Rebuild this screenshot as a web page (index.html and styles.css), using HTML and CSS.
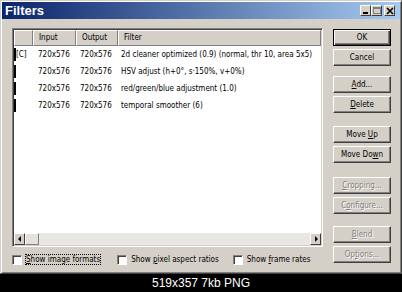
FILE: index.html
```html
<!DOCTYPE html>
<html>
<head>
<meta charset="utf-8">
<link rel="stylesheet" href="styles.css">
</head>
<body>
<div class="window">
  <div class="titlebar">
    <span class="title">Filters</span>
    <div class="tbuttons">
      <span class="tb tb-min"><svg width="8" height="8" viewBox="0 0 8 8"><rect x="1" y="5" width="5" height="2" fill="#000"/></svg></span>
      <span class="tb tb-max tb-dis"><svg width="8" height="8" viewBox="0 0 8 8"><rect x="0.5" y="0.5" width="7" height="6" fill="none" stroke="#808080"/><rect x="0" y="0" width="8" height="2" fill="#808080"/></svg></span>
      <span class="tb tb-close"><svg width="8" height="8" viewBox="0 0 8 8"><path d="M1 1 L7 7 M7 1 L1 7" stroke="#000" stroke-width="1.6"/></svg></span>
    </div>
  </div>
  <div class="content">
    <div class="left">
      <div class="list">
        <div class="header">
          <div class="hcol c0"></div>
          <div class="hcol c1">Input</div>
          <div class="hcol c2">Output</div>
          <div class="hcol c3">Filter</div>
        </div>
        <div class="rows">
          <div class="row"><span class="mark"></span><span class="cell c0">[C]</span><span class="cell c1">720x576</span><span class="cell c2">720x576</span><span class="cell c3">2d cleaner optimized (0.9) (normal, thr 10, area 5x5)</span></div>
          <div class="row"><span class="mark"></span><span class="cell c0"></span><span class="cell c1">720x576</span><span class="cell c2">720x576</span><span class="cell c3">HSV adjust (h+0°, s·150%, v+0%)</span></div>
          <div class="row"><span class="mark"></span><span class="cell c0"></span><span class="cell c1">720x576</span><span class="cell c2">720x576</span><span class="cell c3">red/green/blue adjustment (1.0)</span></div>
          <div class="row"><span class="mark"></span><span class="cell c0"></span><span class="cell c1">720x576</span><span class="cell c2">720x576</span><span class="cell c3">temporal smoother (6)</span></div>
        </div>
        <div class="hscroll">
          <span class="sbtn"><svg width="4" height="6" viewBox="0 0 4 6"><path d="M3 0 L0 3 L3 6 Z" fill="#000"/></svg></span>
          <span class="thumb"></span>
          <span class="track"></span>
          <span class="sbtn"><svg width="4" height="6" viewBox="0 0 4 6"><path d="M1 0 L4 3 L1 6 Z" fill="#000"/></svg></span>
        </div>
      </div>
      <div class="options">
        <label class="opt o1"><span class="cb"></span><span class="focus"><u>S</u>how image formats</span></label>
        <label class="opt o2"><span class="cb"></span><span>Show <u>p</u>ixel aspect ratios</span></label>
        <label class="opt o3"><span class="cb"></span><span>Show <u>f</u>rame rates</span></label>
      </div>
    </div>
    <div class="buttons">
      <div class="btn default"><span>OK</span></div>
      <div class="btn"><span>Cancel</span></div>
      <div class="btn g2"><span><u>A</u>dd...</span></div>
      <div class="btn"><span><u>D</u>elete</span></div>
      <div class="btn g3"><span>Move <u>U</u>p</span></div>
      <div class="btn"><span>Move Do<u>w</u>n</span></div>
      <div class="btn g4 dis"><span><u>C</u>ropping...</span></div>
      <div class="btn dis"><span>C<u>o</u>nfigure...</span></div>
      <div class="btn g5 dis"><span><u>B</u>lend</span></div>
      <div class="btn dis"><span>Op<u>t</u>ions...</span></div>
    </div>
  </div>
</div>
<div class="caption">519x357 7kb PNG</div>
</body>
</html>
```
FILE: styles.css
```css
html, body {
  margin: 0;
  padding: 0;
  background: #000;
}
body {
  width: 402px;
  height: 292px;
  overflow: hidden;
  font-family: "DejaVu Sans Condensed", "Liberation Sans", sans-serif;
  font-size: 8px;
  color: #000;
}
.window {
  box-sizing: border-box;
  width: 402px;
  height: 274px;
  background: #d4d0c8;
  border: 1px solid;
  border-color: #d4d0c8 #404040 #404040 #d4d0c8;
  box-shadow: inset 1px 1px 0 #fff, inset -1px -1px 0 #808080;
  padding: 1px;
  display: flex;
  flex-direction: column;
}
.titlebar {
  height: 17px;
  background: linear-gradient(to right, #0a246a, #a6caf0);
  display: flex;
  align-items: center;
  justify-content: space-between;
  padding: 0 5px 0 3px;
}
.title {
  font-family: "Liberation Sans", Arial, sans-serif;
  font-weight: bold;
  font-size: 13px;
  color: #fff;
}
.tbuttons {
  display: flex;
  gap: 0;
  align-items: center;
}
.tb {
  box-sizing: border-box;
  width: 11px;
  height: 11px;
  background: #d4d0c8;
  border: 1px solid;
  border-color: #fff #404040 #404040 #fff;
  display: flex;
  align-items: center;
  justify-content: center;
}
.tb svg { display: block; }
.tb-close { margin-left: 2px; }
.content {
  flex: 1;
  display: flex;
  padding: 9px 9px 0 10px;
  gap: 10px;
}
.left {
  width: 311px;
  display: flex;
  flex-direction: column;
}
.list {
  box-sizing: border-box;
  height: 219px;
  background: #fff;
  border: 1px solid;
  border-color: #808080 #fff #fff #808080;
  box-shadow: inset 1px 1px 0 #404040, inset -1px -1px 0 #d4d0c8;
  padding: 1px;
  display: flex;
  flex-direction: column;
}
.header {
  display: flex;
  height: 16px;
  background: #d4d0c8;
}
.hcol {
  box-sizing: border-box;
  height: 16px;
  border: 1px solid;
  border-color: #fff #808080 #808080 #fff;
  padding-left: 5px;
  line-height: 14px;
}
.header .c3 { flex: 1; }
.c0 { width: 19px; }
.c1 { width: 43px; }
.c2 { width: 42px; }
.c3 { flex: 1; }
.rows {
  flex: 1;
  display: flex;
  flex-direction: column;
}
.row {
  display: flex;
  height: 17px;
  align-items: center;
  position: relative;
}
.mark {
  position: absolute;
  left: 0;
  top: 2px;
  width: 2px;
  height: 13px;
  background: #000;
}
.cell {
  box-sizing: border-box;
  white-space: nowrap;
}
.row .c0 { padding-left: 2px; }
.row .c1 { padding-left: 5px; }
.row .c2 { padding-left: 4px; }
.row .c3 { padding-left: 3px; }
.hscroll {
  display: flex;
  height: 12px;
  background: #e9e7e3;
}
.sbtn {
  box-sizing: border-box;
  width: 11px;
  height: 12px;
  background: #d4d0c8;
  border: 1px solid;
  border-color: #fff #404040 #404040 #fff;
  display: flex;
  align-items: center;
  justify-content: center;
}
.thumb {
  box-sizing: border-box;
  width: 14px;
  height: 12px;
  background: #e4e2de;
  border: 1px solid;
  border-color: #fff #808080 #808080 #fff;
}
.track { flex: 1; }
.options {
  display: flex;
  align-items: center;
  margin-top: 7px;
  height: 11px;
}
.opt {
  display: flex;
  align-items: center;
  gap: 4px;
  white-space: nowrap;
}
.o2 { margin-left: 17px; }
.o3 { margin-left: 14px; }
.cb {
  box-sizing: border-box;
  width: 10px;
  height: 10px;
  background: #fff;
  border: 1px solid;
  border-color: #808080 #fff #fff #808080;
  box-shadow: inset 1px 1px 0 #404040;
}
.focus {
  outline: 1px dotted #000;
  outline-offset: 0;
}
.buttons {
  display: flex;
  flex-direction: column;
  width: 58px;
  padding-top: 1px;
}
.btn {
  box-sizing: border-box;
  width: 58px;
  height: 17px;
  margin-bottom: 3px;
  background: #d4d0c8;
  border: 1px solid;
  border-color: #fff #404040 #404040 #fff;
  box-shadow: inset -1px -1px 0 #808080;
  display: flex;
  align-items: center;
  justify-content: center;
  white-space: nowrap;
}
.btn.default {
  border: 1px solid #000;
  box-shadow: inset 1px 1px 0 #fff, inset -1px -1px 0 #404040, inset -2px -2px 0 #808080;
}
.g2 { margin-top: 7px; }
.g3 { margin-top: 10px; }
.g4 { margin-top: 11px; }
.g5 { margin-top: 9px; }
.dis {
  color: #808080;
  text-shadow: 1px 1px 0 #fff;
}
.caption {
  height: 18px;
  color: #fff;
  font-family: "Liberation Sans", Arial, sans-serif;
  font-size: 12px;
  text-align: center;
  line-height: 18px;
}
```
